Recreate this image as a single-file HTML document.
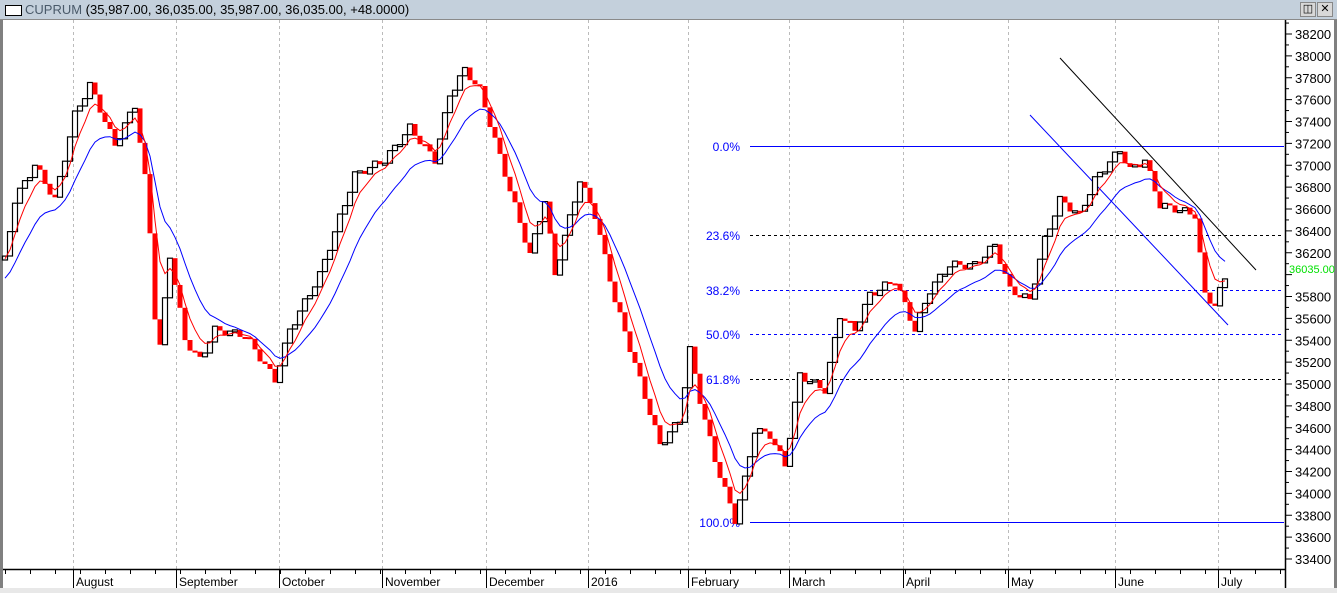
<!DOCTYPE html>
<html><head><meta charset="utf-8">
<style>
html,body{margin:0;padding:0;width:1337px;height:593px;overflow:hidden;background:#fff;font-family:"Liberation Sans",sans-serif}
#tb{position:absolute;left:0;top:0;width:1337px;height:19px;background:#c4d0dc;border-bottom:1px solid #8a8a8a}
#tb .t{position:absolute;left:25px;top:2px;font-size:13px;color:#000}
#tb .t b{font-weight:normal;color:#4a5a6a}
#tb .ic{position:absolute;left:5px;top:5px;width:15px;height:9px;border:1px solid #000;background:#fff}
.btn{position:absolute;top:2px;width:14px;height:13px;background:#d8d8d8;border:1px solid #888;font-size:11px;line-height:13px;text-align:center}
</style></head><body>
<div id="tb"><div class="ic"></div><div class="t"><b>CUPRUM</b> (35,987.00, 36,035.00, 35,987.00, 36,035.00, +48.0000)</div>
<div class="btn" style="left:1300px">&#9707;</div><div class="btn" style="left:1317px">✕</div></div>
<svg id="s" width="1337" height="593" style="position:absolute;left:0;top:0" xmlns="http://www.w3.org/2000/svg"></svg>
<script>
(function(){
var NS="http://www.w3.org/2000/svg",s=document.getElementById('s');
function E(t,a,txt){var e=document.createElementNS(NS,t);for(var k in a)e.setAttribute(k,a[k]);if(txt!=null)e.textContent=txt;s.appendChild(e);return e;}
E('rect',{x:0,y:20,width:3,height:568,fill:'#808080'});
E('rect',{x:1334,y:20,width:3,height:573,fill:'#808080'});
E('rect',{x:0,y:588,width:1337,height:5,fill:'#e8e8e8'});
var months=[[73,'August'],[176,'September'],[279,'October'],[382,'November'],[486,'December'],[588,'2016'],[688,'February'],[789,'March'],[903,'April'],[1008,'May'],[1115,'June'],[1218,'July']];
for(var i=0;i<months.length;i++){var m=months[i];
E('line',{x1:m[0]+.5,y1:20,x2:m[0]+.5,y2:569,stroke:'#bbb','stroke-dasharray':'3,3'});
E('line',{x1:m[0]+.5,y1:569,x2:m[0]+.5,y2:588,stroke:'#000'});
E('text',{x:m[0]+3,y:586,'font-size':12,'font-family':'Liberation Sans, sans-serif'},m[1]);}
for(var x=5;x<1284;x+=25)E('line',{x1:x+.5,y1:569,x2:x+.5,y2:574,stroke:'#000'});
E('line',{x1:3,y1:569.5,x2:1285,y2:569.5,stroke:'#000','stroke-width':1.5});
E('line',{x1:1285.5,y1:20,x2:1285.5,y2:588,stroke:'#000','stroke-width':1.5});
for(var p=33400;p<=38300;p+=100){var y=559-(p-33400)*525/4800;if(y<22)continue;var maj=p%200==0;
E('line',{x1:1285,y1:y,x2:maj?1292:1289,y2:y,stroke:'#000'});
if(maj&&p!=36000)E('text',{x:1295,y:y+5,'font-size':13,'font-family':'Liberation Sans, sans-serif'},String(p));}
E('text',{x:1289,y:273,'font-size':11,fill:'#00e000','font-family':'Liberation Sans, sans-serif'},'36035.00');
var fib=[[146,'0.0%','#0000ff',0],[235,'23.6%','#000',1],[290,'38.2%','#0000ff',1],[334,'50.0%','#0000ff',1],[379,'61.8%','#000',1],[522,'100.0%','#0000ff',0]];
for(var i=0;i<fib.length;i++){var f=fib[i];var a={x1:750,y1:f[0]+.5,x2:1284,y2:f[0]+.5,stroke:f[2]};if(f[3])a['stroke-dasharray']='3,3';E('line',a);
E('text',{x:740,y:f[0]+5,'font-size':12,fill:'#0000ff','text-anchor':'end','font-family':'Liberation Sans, sans-serif'},f[1]);}
E('line',{x1:1060,y1:58,x2:1256,y2:270,stroke:'#000'});
E('line',{x1:1030,y1:115,x2:1228,y2:325,stroke:'#0000ff'});
var P=[[3,260],[5,260],[15,200],[35,165],[55,200],[75,115],[90,85],[115,145],[135,105],[148,200],[158,365],[170,255],[185,340],[200,360],[215,330],[245,335],[275,380],[290,330],[320,275],[355,175],[385,160],[410,128],[435,160],[450,95],[465,70],[480,90],[495,140],[510,190],[530,255],[545,200],[555,275],[580,180],[595,215],[615,300],[640,380],[660,445],[680,420],[690,350],[700,400],[715,460],[735,520],[745,480],[755,430],[770,435],[785,465],[800,375],[825,390],[840,315],[855,330],[870,295],[895,280],[915,330],[930,290],[950,265],[975,265],[995,245],[1010,290],[1030,300],[1045,240],[1060,200],[1080,215],[1095,180],[1120,150],[1130,170],[1145,160],[1160,205],[1180,210],[1195,215],[1205,295],[1215,305],[1228,270]];
function yAt(x){for(var i=1;i<P.length;i++){if(x<=P[i][0]){var a=P[i-1],b=P[i];return a[1]+(b[1]-a[1])*(x-a[0])/(b[0]-a[0]);}}return P[P.length-1][1];}
var prev=yAt(3),r=prev,bl=prev+15,rp='',bp='';
for(var x=5;x<=1226;x+=5){var c=yAt(x)+Math.sin(x*0.9)*4;var o=prev;var top=Math.min(o,c),ht=Math.max(Math.abs(c-o),2);
if(c<o)E('rect',{x:x-2.5,y:top.toFixed(1),width:5,height:ht.toFixed(1),fill:'#fff',stroke:'#000','stroke-width':1.2});
else E('rect',{x:x-2.5,y:top.toFixed(1),width:5,height:ht.toFixed(1),fill:'#ff0000'});
prev=c;r+=(c-r)*0.33;bl+=(c-bl)*0.15;rp+=(rp?'L':'M')+x+' '+r.toFixed(1);bp+=(bp?'L':'M')+x+' '+(bl+6).toFixed(1);}
E('path',{d:bp,fill:'none',stroke:'#0000ff'});
E('path',{d:rp,fill:'none',stroke:'#ff0000'});
})();
</script>
</body></html>
